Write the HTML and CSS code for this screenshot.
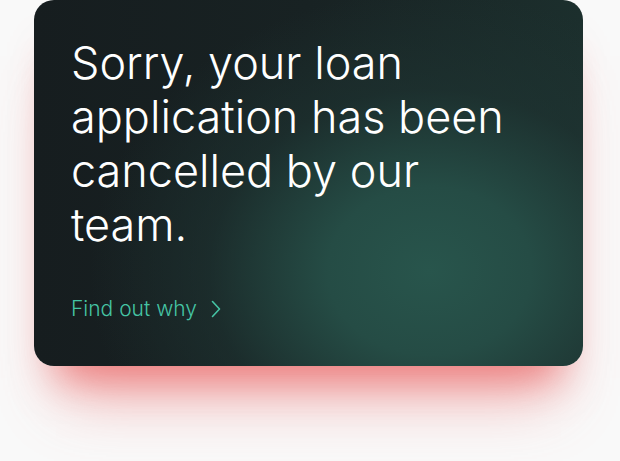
FILE: index.html
```html
<!DOCTYPE html>
<html lang="en">
<head>
    <meta charset="UTF-8">
    <meta name="viewport" content="width=device-width, initial-scale=1">
    <title>Loan Application</title>
    <link rel="stylesheet" href="styles.css">
</head>
<body>
<div class="page">
    <div class="card">
        <h1 class="card-title">Sorry, your loan application has been cancelled by our team.</h1>
        <a class="card-link" href="#">
            Find out why
            <svg class="chevron" width="10" height="18" viewBox="0 0 10 18">
                <path d="M1.5 1.5 L8.5 9 L1.5 16.5" fill="none" stroke="currentColor" stroke-width="1.6" stroke-linecap="round" stroke-linejoin="round"/>
            </svg>
        </a>
    </div>
</div>
</body>
</html>
```

FILE: styles.css
```css
* {
    box-sizing: border-box;
    margin: 0;
}
body {
    background-color: #f9f9f9;
    font-family: "Inter", "Noto Sans", sans-serif;
}
.page {
    min-height: 461px;
    padding: 0 37px 0 34px;
}
.card {
    width: 549px;
    height: 366px;
    border-radius: 20px;
    padding: 36px 37px 0 37px;
    background:
        radial-gradient(ellipse 340px 280px at 72% 74%, #28554c 0%, #254c45 30%, rgba(30, 52, 50, 0.6) 65%, rgba(22, 30, 32, 0) 100%),
        linear-gradient(90deg, #161d1f 0%, #182223 50%, #1c2f2d 100%);
    box-shadow:
        0 34px 40px -22px rgba(232, 90, 90, 0.7),
        0 60px 60px -30px rgba(236, 110, 110, 0.45);
}
.card-title {
    color: #ffffff;
    font-size: 45px;
    font-weight: 300;
    line-height: 54px;
    width: 460px;
}
.card-link {
    display: inline-flex;
    align-items: center;
    gap: 14px;
    margin-top: 44px;
    color: #45c4a4;
    font-size: 21px;
    font-weight: 300;
    text-decoration: none;
}
.chevron {
    display: block;
}
```
